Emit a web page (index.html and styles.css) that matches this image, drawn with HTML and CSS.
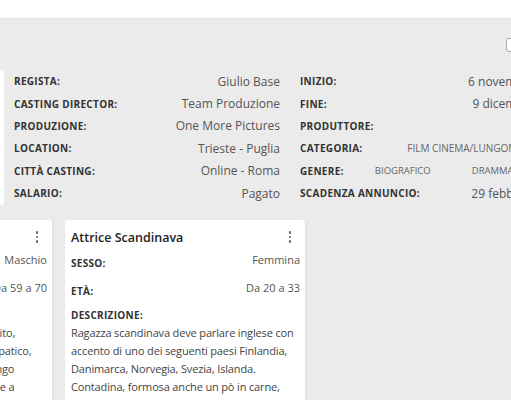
FILE: index.html
```
<!DOCTYPE html>
<html>
  <head>
    <title>Progetto - Casting</title>
    <link rel="stylesheet" href="styles.css">
  </head>
  <body>
    <header class="topbar"></header>

    <main class="page">
      <div class="toolbar">
        <input type="checkbox" class="select-all" />
      </div>

      <section class="project">
        <div class="poster"></div>

        <div class="details">
          <div class="info-col">
            <div class="info-row"><span class="label">Regista:</span><span class="value">Giulio Base</span></div>
            <div class="info-row"><span class="label">Casting director:</span><span class="value">Team Produzione</span></div>
            <div class="info-row"><span class="label">Produzione:</span><span class="value">One More Pictures</span></div>
            <div class="info-row"><span class="label">Location:</span><span class="value">Trieste - Puglia</span></div>
            <div class="info-row"><span class="label">Città casting:</span><span class="value">Online - Roma</span></div>
            <div class="info-row"><span class="label">Salario:</span><span class="value">Pagato</span></div>
          </div>

          <div class="info-col">
            <div class="info-row"><span class="label">Inizio:</span><span class="value">6 novembre 2023</span></div>
            <div class="info-row"><span class="label">Fine:</span><span class="value">9 dicembre 2023</span></div>
            <div class="info-row"><span class="label">Produttore:</span><span class="value"></span></div>
            <div class="info-row"><span class="label">Categoria:</span><span class="tag">Film cinema/lungometraggio</span></div>
            <div class="info-row">
              <span class="label">Genere:</span>
              <span class="genres">
                <span class="tag">Biografico</span>
                <span class="tag">Drammatico</span>
              </span>
            </div>
            <div class="info-row"><span class="label">Scadenza annuncio:</span><span class="value">29 febbraio 2024</span></div>
          </div>
        </div>
      </section>

      <section class="roles">
        <div class="role-card">
          <div class="role-head">
            <h3>Attore Nonno</h3>
            <button class="more" aria-label="menu"><i></i><i></i><i></i></button>
          </div>
          <div class="field"><span class="label">Sesso:</span><span class="value">Maschio</span></div>
          <div class="field"><span class="label">Età:</span><span class="value">Da 59 a 70</span></div>
          <div class="desc">
            <span class="label">Descrizione:</span>
            <p>Signore anziano, elegante e ben vestito,<br>dall'aria buona, cordiale e molto simpatico,<br>con il viso segnato e uno sguardo lungo<br>sempre pronto a ridere, a scherzare e a<br>raccontare vecchie storie (non allenato)</p>
          </div>
        </div>

        <div class="role-card">
          <div class="role-head">
            <h3>Attrice Scandinava</h3>
            <button class="more" aria-label="menu"><i></i><i></i><i></i></button>
          </div>
          <div class="field"><span class="label">Sesso:</span><span class="value">Femmina</span></div>
          <div class="field"><span class="label">Età:</span><span class="value">Da 20 a 33</span></div>
          <div class="desc">
            <span class="label">Descrizione:</span>
            <p>Ragazza scandinava deve parlare inglese con accento di uno dei seguenti paesi Finlandia, Danimarca, Norvegia, Svezia, Islanda.<br>Contadina, formosa anche un pò in carne, selvaggia, bella ma sempre spettinata. Non è una ragazza di città.</p>
          </div>
        </div>
      </section>
    </main>
  </body>
</html>
```

FILE: styles.css
```
html {
  overflow: hidden;
}

body {
  margin: 0;
  font-family: "Open Sans", "Noto Sans", Arial, sans-serif;
  background-color: #ebebeb;
  color: #444;
}

.topbar {
  height: 18px;
  background-color: #fff;
  border-bottom: 1px solid #e2e2e2;
}

.page {
  width: 708px;
  margin-left: -200px;
  padding: 0 12px;
}

.toolbar {
  height: 51px;
  display: flex;
  justify-content: flex-end;
  align-items: center;
}

.select-all {
  appearance: none;
  box-sizing: border-box;
  width: 14px;
  height: 14px;
  margin: 0;
  background-color: #fff;
  border: 1px solid #a9a9a9;
  border-radius: 3px;
}

.project {
  display: flex;
  gap: 10px;
  padding-left: 72px;
}

.poster {
  flex: none;
  width: 120px;
  height: 135px;
  background-color: #fff;
  border-radius: 3px;
}

.details {
  flex: none;
  display: flex;
  gap: 20px;
}

.info-col {
  width: 266px;
}

.info-row {
  height: 22.4px;
  display: flex;
  justify-content: space-between;
  align-items: center;
}

.label {
  font-size: 10px;
  font-weight: 700;
  text-transform: uppercase;
  letter-spacing: 0.3px;
  color: #333;
}

.value {
  font-size: 12px;
  color: #555;
}

.tag {
  font-size: 9.5px;
  text-transform: uppercase;
  color: #666;
}

.info-row > .tag {
  font-size: 10px;
}

.genres {
  flex: 1;
  display: flex;
  justify-content: center;
  gap: 41px;
}

.roles {
  display: flex;
  gap: 13px;
  margin-top: 15px;
}

.role-card {
  width: 229px;
  height: 210px;
  padding: 8px 5px 0 6px;
  background-color: #fff;
  border-radius: 3px;
  box-shadow: 1px 1px 3px rgba(0, 0, 0, 0.06);
  overflow: hidden;
}

.role-head {
  display: flex;
  justify-content: space-between;
  align-items: center;
  height: 18px;
}

.role-head h3 {
  margin: 0;
  font-size: 12.5px;
  font-weight: 600;
  color: #222;
}

.more {
  width: 20px;
  height: 18px;
  padding: 0;
  border: none;
  background: none;
  display: flex;
  flex-direction: column;
  align-items: center;
  justify-content: center;
  gap: 2px;
}

.more i {
  width: 2.5px;
  height: 2.5px;
  border-radius: 50%;
  background-color: #666;
}

.field {
  height: 28px;
  display: flex;
  justify-content: space-between;
  align-items: flex-start;
  padding-top: 6px;
  box-sizing: border-box;
}

.field .label {
  margin-top: 4px;
}

.field .value {
  font-size: 11px;
  line-height: 16px;
}

.desc p {
  margin: 0;
  font-size: 11px;
  line-height: 18px;
  letter-spacing: -0.15px;
  color: #444;
}
```
